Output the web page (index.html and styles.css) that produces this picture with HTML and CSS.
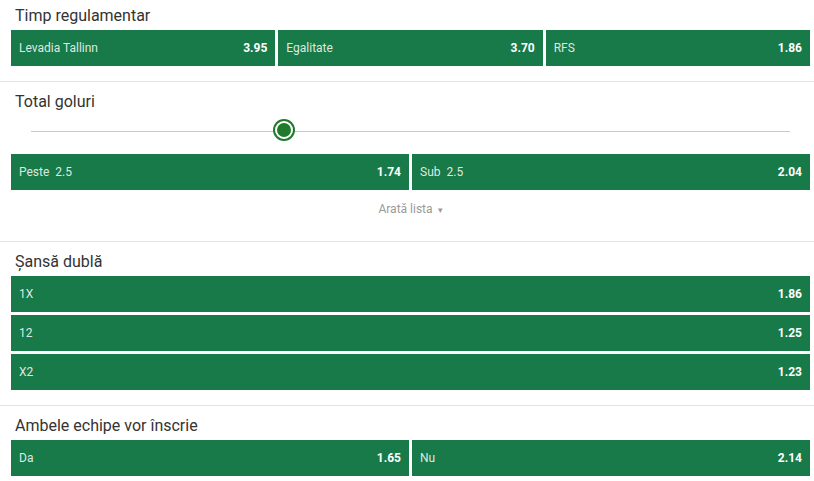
FILE: index.html
```html
<!DOCTYPE html>
<html lang="ro">
<head>
    <meta charset="UTF-8">
    <meta name="viewport" content="width=device-width, initial-scale=1.0">
    <title>Cote</title>
    <link rel="stylesheet" href="styles.css">
</head>
<body>
    <div class="market first">
        <h2 class="market-title">Timp regulamentar</h2>
        <div class="odds-row">
            <button class="odd"><span class="odd-label">Levadia Tallinn</span><span class="odd-value">3.95</span></button>
            <button class="odd"><span class="odd-label">Egalitate</span><span class="odd-value">3.70</span></button>
            <button class="odd"><span class="odd-label">RFS</span><span class="odd-value">1.86</span></button>
        </div>
    </div>

    <div class="market">
        <h2 class="market-title">Total goluri</h2>
        <div class="slider">
            <div class="slider-track">
                <span class="slider-thumb" style="left: 33.3%"></span>
            </div>
        </div>
        <div class="odds-row">
            <button class="odd"><span class="odd-label">Peste <span class="odd-line">2.5</span></span><span class="odd-value">1.74</span></button>
            <button class="odd"><span class="odd-label">Sub <span class="odd-line">2.5</span></span><span class="odd-value">2.04</span></button>
        </div>
        <div class="show-more">Arată lista <span class="caret">&#9662;</span></div>
    </div>

    <div class="market">
        <h2 class="market-title">Șansă dublă</h2>
        <div class="odds-list">
            <button class="odd"><span class="odd-label">1X</span><span class="odd-value">1.86</span></button>
            <button class="odd"><span class="odd-label">12</span><span class="odd-value">1.25</span></button>
            <button class="odd"><span class="odd-label">X2</span><span class="odd-value">1.23</span></button>
        </div>
    </div>

    <div class="market last">
        <h2 class="market-title">Ambele echipe vor înscrie</h2>
        <div class="odds-row">
            <button class="odd"><span class="odd-label">Da</span><span class="odd-value">1.65</span></button>
            <button class="odd"><span class="odd-label">Nu</span><span class="odd-value">2.14</span></button>
        </div>
    </div>
</body>
</html>
```

FILE: styles.css
```css
body {
    font-family: Roboto, "Liberation Sans", Arial, sans-serif;
    background-color: #fff;
    margin: 0;
    padding: 0;
    color: #333;
}

.market {
    padding: 10px 4px 15px 11px;
    border-bottom: 1px solid #e2e2e2;
}

.market.first {
    padding-top: 6px;
}

.market.last {
    border-bottom: none;
}

.market-title {
    margin: 0 0 4px 4px;
    font-size: 16px;
    font-weight: 400;
    line-height: 20px;
    color: #333;
}

.odds-row {
    display: flex;
    gap: 3px;
}

.odds-list {
    display: flex;
    flex-direction: column;
    gap: 3px;
}

.odd {
    flex: 1;
    display: flex;
    justify-content: space-between;
    align-items: center;
    height: 36px;
    padding: 0 8px;
    background-color: #177a48;
    border: none;
    font-family: inherit;
    font-size: 12px;
    cursor: pointer;
}

.odds-list .odd {
    flex: none;
}

.odd-label {
    color: rgba(255, 255, 255, 0.86);
}

.odd-line {
    margin-left: 3px;
}

.odd-value {
    color: #fff;
    font-weight: 700;
}

.slider {
    height: 38px;
    padding: 0 20px;
}

.slider-track {
    position: relative;
    top: 15px;
    height: 1px;
    background-color: #c8c8c8;
}

.slider-thumb {
    position: absolute;
    top: -10px;
    width: 14px;
    height: 14px;
    margin-left: -9px;
    border-radius: 50%;
    background-color: #1f7a2c;
    border: 2px solid #fff;
    box-shadow: 0 0 0 2px #1f7a2c;
}

.show-more {
    padding: 9px 0 6px;
    line-height: 20px;
    text-align: center;
    font-size: 12px;
    color: #9a9a9a;
}

.caret {
    font-size: 9px;
    margin-left: 2px;
}
```
